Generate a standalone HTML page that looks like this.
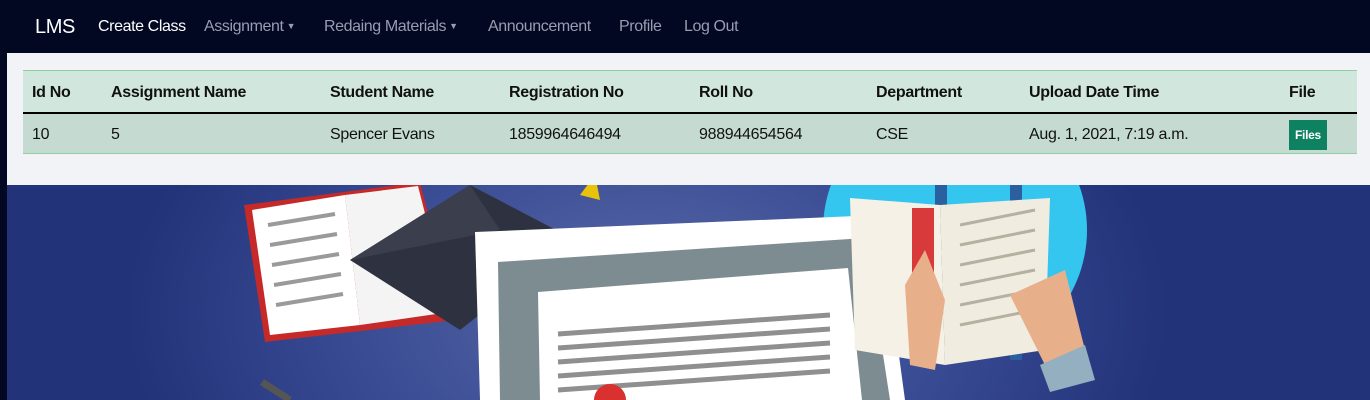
<!DOCTYPE html>
<html><head><meta charset="utf-8"><style>
*{margin:0;padding:0;box-sizing:border-box}
body{width:1370px;height:400px;overflow:hidden;font-family:"Liberation Sans",sans-serif;background:#020722;position:relative}
.nav{position:absolute;left:0;top:0;width:1370px;height:53px;background:#020722;color:#fff}
.nav span{position:absolute;top:18px;font-size:16px;color:#9a9db0;letter-spacing:-0.4px}
.nav i{font-style:normal;font-size:9px;vertical-align:2px;margin-left:3px}
.hero{position:absolute;left:7px;top:53px;width:1363px;height:347px;background:radial-gradient(ellipse 520px 330px at 640px 260px,#5a6aa8 0%,#3a4c94 55%,#22337a 100%)}
.panel{position:absolute;left:7px;top:53px;width:1363px;height:132px;background:#f2f3f7}
table{position:absolute;left:23px;top:70px;width:1334px;border-collapse:collapse;font-size:16px;color:#111;letter-spacing:-0.3px}
th,td{text-align:left;padding:3px 0 0 9px;white-space:nowrap}
th{height:42px;background:#d1e6dd;font-weight:bold;border-top:1px solid #8fd19e;border-bottom:2px solid #000}
td{height:41px;background:#c5dbd1;border-bottom:1px solid #8fd19e}
.btn{display:inline-block;background:#0e8160;color:#fff;font-size:12px;font-weight:bold;padding:8px 6px}
</style></head><body>
<div class="hero">
<svg width="1363" height="347" viewBox="7 53 1363 347" style="position:absolute;left:0;top:0">
<circle cx="955" cy="230" r="132" fill="#34c6ef"/>
<rect x="935" y="100" width="12" height="260" fill="#2a5fa0"/>
<rect x="1010" y="100" width="12" height="260" fill="#2a5fa0"/>
<polygon points="244,205 420,182 455,320 265,342" fill="#c52a28"/>
<polygon points="252,210 345,195 360,325 270,335" fill="#fff"/>
<polygon points="345,195 418,186 450,312 360,325" fill="#f4f4f4"/>
<g stroke="#9a9a9a" stroke-width="4"><line x1="268" y1="225" x2="335" y2="214"/><line x1="270" y1="245" x2="337" y2="234"/><line x1="272" y1="265" x2="339" y2="254"/><line x1="274" y1="285" x2="341" y2="274"/><line x1="276" y1="305" x2="343" y2="294"/></g>
<polygon points="350,260 470,185 575,240 460,330" fill="#2e3240"/>
<polygon points="350,260 470,185 500,230" fill="#3b3f4d"/>
<polygon points="475,232 880,215 905,400 480,400" fill="#fff"/>
<polygon points="498,262 865,238 890,400 500,400" fill="#7d8c90"/>
<polygon points="538,292 848,268 862,400 540,400" fill="#fff"/>
<g stroke="#8f8f8f" stroke-width="5"><line x1="558" y1="334" x2="830" y2="315"/><line x1="558" y1="348" x2="830" y2="329"/><line x1="558" y1="362" x2="830" y2="343"/><line x1="558" y1="376" x2="830" y2="357"/><line x1="558" y1="390" x2="830" y2="371"/></g>
<polygon points="850,198 940,205 945,365 855,350" fill="#f5f1e6"/>
<polygon points="940,205 1050,198 1045,350 945,365" fill="#f0ecdf"/>
<rect x="912" y="208" width="22" height="80" fill="#d8393a"/>
<g stroke="#b5b0a0" stroke-width="3"><line x1="960" y1="225" x2="1035" y2="210"/><line x1="960" y1="245" x2="1035" y2="230"/><line x1="960" y1="265" x2="1035" y2="250"/><line x1="960" y1="285" x2="1035" y2="270"/><line x1="960" y1="305" x2="1035" y2="290"/><line x1="960" y1="325" x2="1035" y2="310"/></g>
<polygon points="905,285 925,250 945,300 935,370 910,365" fill="#e8b08a"/>
<polygon points="1010,295 1065,270 1085,350 1045,365" fill="#e8b08a"/>
<polygon points="1040,365 1085,345 1095,380 1050,392" fill="#94afc0"/>
<polygon points="580,195 595,175 600,200" fill="#e9c30a"/>
<circle cx="610" cy="400" r="16" fill="#d93030"/>
<line x1="262" y1="382" x2="290" y2="400" stroke="#555" stroke-width="7"/>
</svg>
</div>
<div class="panel"></div>
<div class="nav">
<span style="left:35px;top:16px;font-size:20px;color:#fff">LMS</span>
<span style="left:98px;color:#fff">Create Class</span>
<span style="left:204px">Assignment<i>▼</i></span>
<span style="left:324px">Redaing Materials<i>▼</i></span>
<span style="left:488px">Announcement</span>
<span style="left:619px">Profile</span>
<span style="left:684px">Log Out</span>
</div>
<table>
<tr><th style="width:79px">Id No</th><th style="width:219px">Assignment Name</th><th style="width:179px">Student Name</th><th style="width:190px">Registration No</th><th style="width:177px">Roll No</th><th style="width:153px">Department</th><th style="width:260px">Upload Date Time</th><th>File</th></tr>
<tr><td>10</td><td>5</td><td>Spencer Evans</td><td>1859964646494</td><td>988944654564</td><td>CSE</td><td>Aug. 1, 2021, 7:19 a.m.</td><td><span class="btn">Files</span></td></tr>
</table>
</body></html>
